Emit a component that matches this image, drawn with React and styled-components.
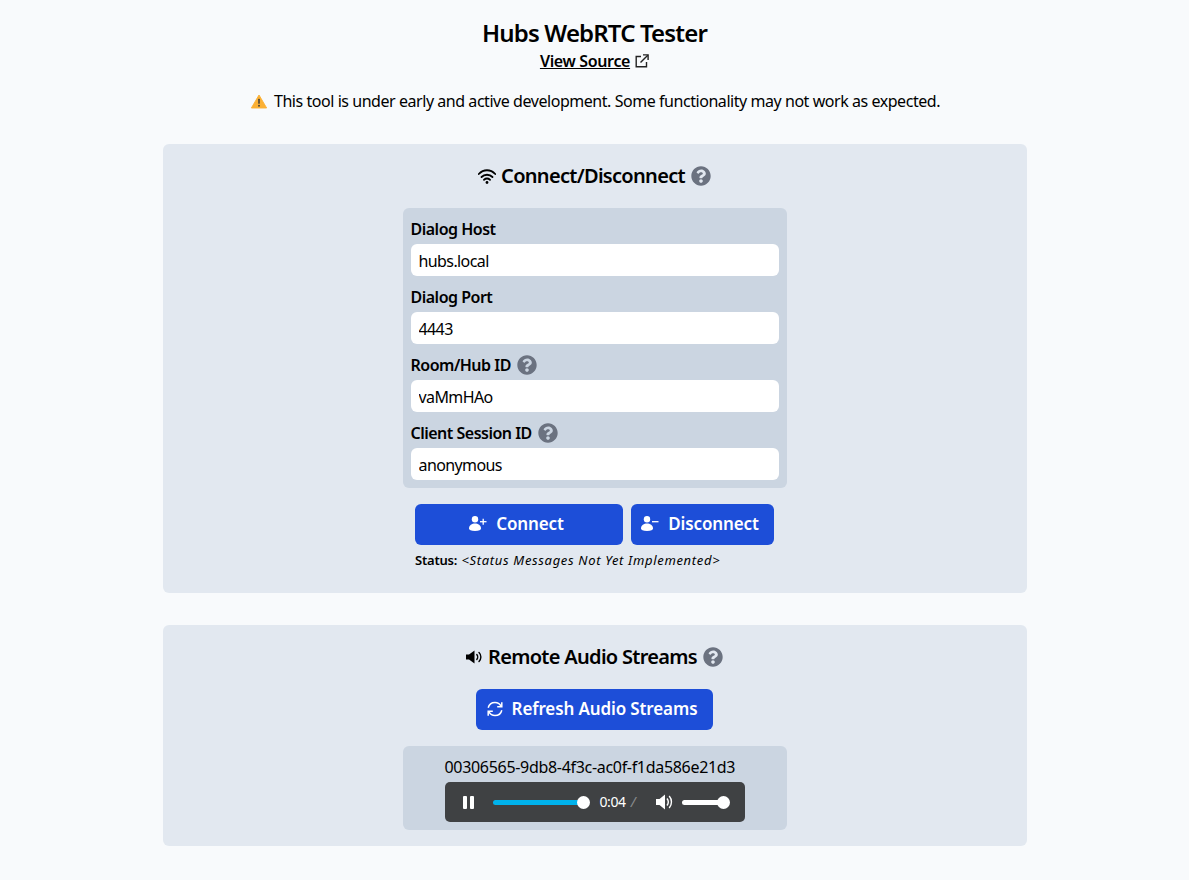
import React from 'react';
import styled, { createGlobalStyle } from 'styled-components';
import { FaQuestionCircle } from 'react-icons/fa';

const Global = createGlobalStyle`
    html, body {
        margin: 0;
        padding: 0;
        background: #f8fafc;
    }
    body {
        font-family: 'Noto Sans', sans-serif;
        font-size: 16px;
        line-height: 24px;
        color: #000;
        letter-spacing: -0.45px;
    }
    * {
        box-sizing: border-box;
    }
`
const Page = styled.div`
    display: flex;
    flex-direction: column;
    align-items: center;
    padding-top: 17px;
    padding-bottom: 34px;
`
const Title = styled.h1`
    margin: 0;
    font-size: 24px;
    line-height: 32px;
    font-weight: 600;
    letter-spacing: -0.85px;
`
const SourceLink = styled.a`
    display: flex;
    align-items: center;
    gap: 5px;
    color: #000;
    font-weight: 600;
    letter-spacing: -0.35px;
    text-decoration: none;
    cursor: pointer;

    span {
        text-decoration: underline;
    }
`
const Warning = styled.p`
    display: flex;
    align-items: center;
    gap: 7px;
    margin: 16px 0 31px;
    padding-left: 2px;
`
const Card = styled.section`
    width: 864px;
    background: #e2e8f0;
    border-radius: 6px;
    padding: 16px 16px;
    display: flex;
    flex-direction: column;
    align-items: center;
    margin-bottom: 32px;
    &:last-child {
        margin-bottom: 0;
    }
`
const CardTitle = styled.h2`
    display: flex;
    align-items: center;
    gap: 5px;
    margin: 0 0 16px;
    font-size: 20px;
    line-height: 32px;
    font-weight: 600;
    letter-spacing: -0.7px;
`
const HelpIcon = styled(FaQuestionCircle)`
    width: 20px;
    height: 20px;
    color: #6b7280;
    margin-left: ${({ $left }) => $left || 1}px;
`
const Panel = styled.div`
    width: 384px;
    background: #cbd5e1;
    border-radius: 6px;
    padding: 8px;
    display: flex;
    flex-direction: column;
    gap: 8px;
`
const Field = styled.label`
    display: flex;
    flex-direction: column;
`
const FieldLabel = styled.span`
    display: flex;
    align-items: center;
    height: 28px;
    padding-bottom: 2px;
    font-weight: 600;
    letter-spacing: -0.5px;
`
const Input = styled.input`
    height: 32px;
    border: 0;
    border-radius: 6px;
    background: #fff;
    padding: 2px 8px 0;
    font: inherit;
    letter-spacing: -0.6px;
    color: #000;
    outline: none;
`
const ButtonRow = styled.div`
    display: flex;
    gap: 8px;
    margin-top: 16px;
`
const Button = styled.button`
    display: flex;
    align-items: center;
    justify-content: center;
    gap: 9px;
    height: 41px;
    width: ${({ $width }) => $width}px;
    padding: 0 5px 2px 0;
    border: 0;
    border-radius: 6px;
    background: #1d4ed8;
    color: #fff;
    font-family: inherit;
    font-size: 17px;
    font-weight: 600;
    letter-spacing: -0.12px;
    cursor: pointer;
`
const Status = styled.div`
    width: 359px;
    margin-top: 4px;
    padding-bottom: 6px;
    font-size: 13px;
    line-height: 22px;
    font-weight: 600;
    letter-spacing: -0.2px;

    em {
        margin-left: 1px;
        font-weight: 400;
        letter-spacing: 0.67px;
    }
`
const StreamPanel = styled(Panel)`
    align-items: center;
    margin-top: 16px;
    padding: 9px 8px 8px;
`
const StreamBlock = styled.div`
    width: 300px;
    display: flex;
    flex-direction: column;
    gap: 3px;
    letter-spacing: -0.31px;
`
const PlayerBar = styled.div`
    height: 40px;
    background: #3f4143;
    border-radius: 5px;
    display: flex;
    align-items: center;
    padding: 0 0 0 18px;
    color: #fff;
    font-size: 14px;
`
const Track = styled.div`
    position: relative;
    width: ${({ $width }) => $width}px;
    height: 5px;
    margin-left: ${({ $left }) => $left}px;
    border-radius: 3px;
    background: ${({ $color }) => $color};

    &::after {
        content: '';
        position: absolute;
        right: -7px;
        top: -4px;
        width: 13px;
        height: 13px;
        border-radius: 50%;
        background: #fff;
    }
`
const Time = styled.span`
    margin-left: 17px;
    letter-spacing: -0.4px;
    i {
        color: #8a8c8e;
        margin-left: 5px;
    }
`
const VolumeButton = styled.svg`
    margin-left: 21px;
`

const ExternalIcon = () => (
    <svg width="14" height="14" viewBox="0 0 14 14" fill="none" stroke="#222" strokeWidth="1.4">
        <path d="M6 2.5 H1.2 V12.8 H11.5 V8" />
        <path d="M5.5 8.5 L12.8 1.2" />
        <path d="M8 0.9 H13.1 V6" />
    </svg>
)
const WarningIcon = () => (
    <svg width="16" height="15" viewBox="0 0 17 15">
        <path d="M8.5 0.6 L16.6 14.4 L0.4 14.4 Z" fill="#fbb034" stroke="#fbb034" strokeLinejoin="round" />
        <rect x="7.7" y="4.5" width="1.6" height="5.5" rx="0.6" fill="#3b3b3b" />
        <circle cx="8.5" cy="12" r="1" fill="#3b3b3b" />
    </svg>
)
const WifiIcon = () => (
    <svg width="18" height="15" viewBox="0 0 18 15" fill="none" stroke="#000" strokeWidth="1.8" strokeLinecap="round">
        <path d="M0.8 5 C5.5 0 12.5 0 17.2 5" />
        <path d="M3.5 8 C6.5 5 11.5 5 14.5 8" />
        <path d="M6 10.8 C7.8 9.3 10.2 9.3 12 10.8" />
        <circle cx="9" cy="13.5" r="1.4" fill="#000" stroke="none" />
    </svg>
)
const SpeakerIcon = () => (
    <svg width="17" height="14" viewBox="0 0 17 14" fill="none" stroke="#000" strokeWidth="1.4" strokeLinecap="round">
        <path d="M0 4.5 H3 L8.5 0.5 V13.5 L3 9.5 H0 Z" fill="#000" stroke="none" />
        <path d="M10.8 4.5 C12 5.8 12 8.2 10.8 9.5" />
        <path d="M13 2.5 C15.5 5 15.5 9 13 11.5" />
    </svg>
)
const UserIcon = ({ plus }) => (
    <svg width="18" height="15" viewBox="0 0 18 15" fill="none" stroke="#fff" strokeWidth="1.3">
        <circle cx="6" cy="3.2" r="3.2" fill="#fff" stroke="none" />
        <path d="M0 12.5 C0 9 3 7.5 6 7.5 C9 7.5 12 9 12 12.5 C12 14 10 15 6 15 C2 15 0 14 0 12.5 Z" fill="#fff" stroke="none" />
        <path d="M11 5.7 H17.5" />
        {plus && <path d="M14.2 2.7 V8.7" />}
    </svg>
)
const RefreshIcon = () => (
    <svg width="16" height="16" viewBox="0 0 16 16" fill="none" stroke="#fff" strokeWidth="1.5">
        <g>
            <path d="M1.2 6.8 C2 3.5 4.8 1.5 8 1.5 C10.6 1.5 12.8 2.9 14 5.2" />
            <path d="M14.8 1.2 V5.8 H10.2" />
        </g>
        <g transform="rotate(180 8 8)">
            <path d="M1.2 6.8 C2 3.5 4.8 1.5 8 1.5 C10.6 1.5 12.8 2.9 14 5.2" />
            <path d="M14.8 1.2 V5.8 H10.2" />
        </g>
    </svg>
)
const PauseIcon = () => (
    <svg width="11" height="13" viewBox="0 0 11 13" fill="#fff">
        <rect x="0" y="0" width="4" height="13" rx="1" />
        <rect x="7" y="0" width="4" height="13" rx="1" />
    </svg>
)
const VolumeIcon = () => (
    <VolumeButton width="17" height="16" viewBox="0 0 17 16" fill="none">
        <path d="M0 5 H3.5 L9 0.5 V15.5 L3.5 11 H0 Z" fill="#fff" />
        <path d="M11 4.5 C12.5 6.5 12.5 9.5 11 11.5" stroke="#fff" strokeWidth="1.4" />
        <path d="M13.2 2 C16.2 5.5 16.2 10.5 13.2 14" stroke="#fff" strokeWidth="1.4" />
    </VolumeButton>
)

function App() {
    return (
        <>
            <Global />
            <Page>
                <Title>Hubs WebRTC Tester</Title>
                <SourceLink>
                    <span>View Source</span>
                    <ExternalIcon />
                </SourceLink>
                <Warning>
                    <WarningIcon />
                    This tool is under early and active development. Some functionality may not work as expected.
                </Warning>

                <Card>
                    <CardTitle>
                        <WifiIcon />
                        Connect/Disconnect
                        <HelpIcon />
                    </CardTitle>
                    <Panel>
                        <Field>
                            <FieldLabel>Dialog Host</FieldLabel>
                            <Input defaultValue="hubs.local" />
                        </Field>
                        <Field>
                            <FieldLabel>Dialog Port</FieldLabel>
                            <Input defaultValue="4443" />
                        </Field>
                        <Field>
                            <FieldLabel>Room/Hub ID<HelpIcon $left={6} /></FieldLabel>
                            <Input defaultValue="vaMmHAo" />
                        </Field>
                        <Field>
                            <FieldLabel>Client Session ID<HelpIcon $left={6} /></FieldLabel>
                            <Input defaultValue="anonymous" />
                        </Field>
                    </Panel>
                    <ButtonRow>
                        <Button $width={208}><UserIcon plus />Connect</Button>
                        <Button $width={143}><UserIcon />Disconnect</Button>
                    </ButtonRow>
                    <Status>Status: <em>&lt;Status Messages Not Yet Implemented&gt;</em></Status>
                </Card>

                <Card>
                    <CardTitle>
                        <SpeakerIcon />
                        Remote Audio Streams
                        <HelpIcon />
                    </CardTitle>
                    <Button $width={237}><RefreshIcon />Refresh Audio Streams</Button>
                    <StreamPanel>
                        <StreamBlock>
                            <span>00306565-9db8-4f3c-ac0f-f1da586e21d3</span>
                            <PlayerBar>
                                <PauseIcon />
                                <Track $left={19} $width={90} $color="#00b2ec" />
                                <Time>0:04<i>/</i></Time>
                                <VolumeIcon />
                                <Track $left={9} $width={41} $color="#fff" />
                            </PlayerBar>
                        </StreamBlock>
                    </StreamPanel>
                </Card>
            </Page>
        </>
    );
}

export default App;
